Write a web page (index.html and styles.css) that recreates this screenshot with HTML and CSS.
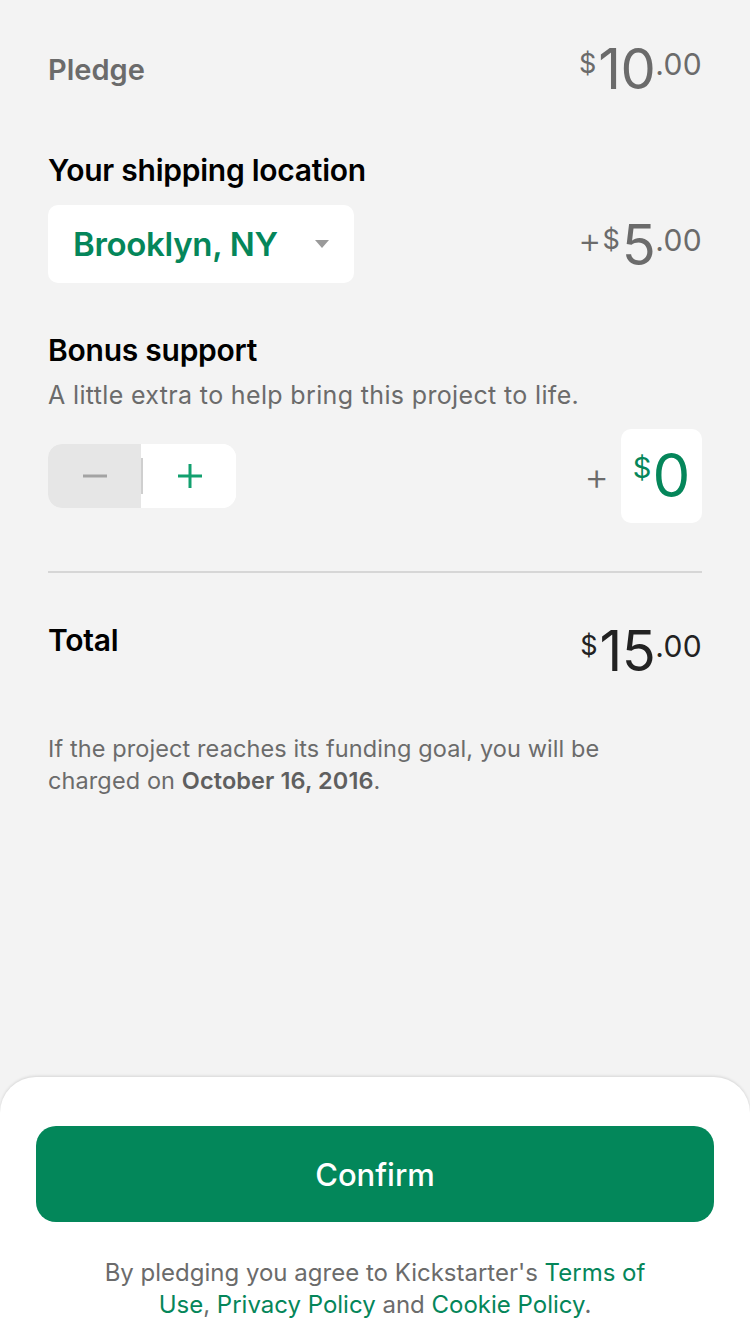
FILE: index.html
```html
<!DOCTYPE html>
<html>
<head>
<meta charset="utf-8">
<link rel="stylesheet" href="styles.css">
</head>
<body>
<div class="screen">
  <main class="content">
    <section class="row pledge-row">
      <span class="label muted">Pledge</span>
      <span class="money muted"><span class="cur">$</span><span class="int">10</span><span class="dec">.00</span></span>
    </section>

    <section class="block shipping">
      <h2 class="title">Your shipping location</h2>
      <div class="row ship-row">
        <div class="select">
          <span class="select-text">Brooklyn, NY</span>
          <svg class="caret" width="16" height="10" viewBox="0 0 16 10"><path d="M1 1h14L8 9z" fill="#9a9a9a"/></svg>
        </div>
        <span class="money muted"><span class="plus-sign">+</span><span class="cur">$</span><span class="int">5</span><span class="dec">.00</span></span>
      </div>
    </section>

    <section class="block bonus">
      <h2 class="title">Bonus support</h2>
      <p class="sub">A little extra to help bring this project to life.</p>
      <div class="row bonus-row">
        <div class="stepper">
          <div class="step minus">
            <svg width="24" height="24" viewBox="0 0 24 24"><path d="M0 12h24" stroke="#a3a3a3" stroke-width="3"/></svg>
          </div>
          <span class="step-sep"></span>
          <div class="step plus">
            <svg width="24" height="24" viewBox="0 0 24 24"><path d="M0 12h24M12 0v24" stroke="#12a06f" stroke-width="3"/></svg>
          </div>
        </div>
        <div class="bonus-amount">
          <span class="bonus-plus">+</span>
          <div class="amount-box"><span class="cur">$</span><span class="int">0</span></div>
        </div>
      </div>
    </section>

    <hr class="divider">

    <section class="row total-row">
      <span class="title">Total</span>
      <span class="money dark"><span class="cur">$</span><span class="int">15</span><span class="dec">.00</span></span>
    </section>

    <p class="note">If the project reaches its funding goal, you will be charged on <b>October 16, 2016</b>.</p>
  </main>

  <footer class="sheet">
    <button class="confirm">Confirm</button>
    <p class="legal">By pledging you agree to Kickstarter's <a>Terms of Use</a>, <a>Privacy Policy</a> and <a>Cookie Policy</a>.</p>
  </footer>
</div>
</body>
</html>
```

FILE: styles.css
```css
* { box-sizing: border-box; margin: 0; padding: 0; }
html, body { width: 750px; height: 1334px; }
body {
  background: #f3f3f3;
  font-family: Inter, "Noto Sans", sans-serif;
  color: #000;
  overflow: hidden;
}
.screen {
  height: 1334px;
  display: flex;
  flex-direction: column;
}
.content {
  flex: 1;
  padding: 0 48px;
}
.row {
  display: flex;
  justify-content: space-between;
}
.muted { color: #6b6b6b; }
.dark { color: #222; }

.pledge-row {
  padding-top: 40px;
  align-items: flex-start;
}
.label {
  font-size: 29px;
  font-weight: 600;
  line-height: 34px;
  margin-top: 13px;
}
.money {
  display: flex;
  align-items: flex-start;
  line-height: 1;
  margin-top: 1px;
}
.money .cur { font-size: 27px; margin-top: 9px; margin-right: 2px; }
.money .int { font-size: 56px; letter-spacing: -0.5px; }
.money .dec { font-size: 30px; margin-top: 8px; letter-spacing: 0.3px; }
.money .plus-sign { font-size: 36px; font-weight: 300; margin-top: 5px; margin-right: 1px; }

.title {
  font-size: 30px;
  font-weight: 600;
  line-height: 36px;
  letter-spacing: -0.25px;
}
.shipping { padding-top: 55px; }
.ship-row { margin-top: 17px; align-items: flex-start; }
.select {
  width: 306px;
  height: 78px;
  background: #fff;
  border-radius: 10px;
  display: flex;
  align-items: center;
  justify-content: space-between;
  padding: 0 24px 0 25px;
}
.select-text {
  color: #05865a;
  font-size: 33px;
  font-weight: 600;
  letter-spacing: -0.3px;
}
.ship-row .money { margin-top: 12px; }

.bonus { padding-top: 49px; }
.sub {
  margin-top: 12px;
  font-size: 25px;
  color: #6b6b6b;
  line-height: 30px;
  letter-spacing: 0.35px;
}
.bonus-row { margin-top: 19px; align-items: center; }
.stepper {
  display: flex;
  align-items: center;
  height: 64px;
  border-radius: 14px;
  overflow: hidden;
  background: #fff;
}
.step {
  height: 64px;
  display: flex;
  align-items: center;
  justify-content: center;
}
.step.minus { background: #e6e6e6; width: 93px; }
.step-sep { width: 2px; height: 36px; background: #cfcfcf; }
.step.plus { background: #fff; width: 93px; }
.bonus-amount { display: flex; align-items: center; gap: 12px; }
.bonus-plus { font-size: 38px; font-weight: 300; color: #6b6b6b; margin-top: 0; }
.amount-box {
  width: 81px;
  height: 94px;
  background: #fff;
  border-radius: 10px;
  display: flex;
  justify-content: center;
  align-items: flex-start;
  padding-top: 16px;
  color: #05865a;
  line-height: 1;
}
.amount-box .cur { font-size: 29px; margin-top: 8px; margin-right: 1px; }
.amount-box .int { font-size: 60px; }

.divider {
  border: none;
  border-top: 2px solid #d6d6d6;
  margin-top: 48px;
}
.total-row { padding-top: 49px; align-items: flex-start; }
.total-row .title { margin-top: 0; }

.note {
  margin-top: 54px;
  max-width: 600px;
  font-size: 23.5px;
  line-height: 32px;
  color: #6b6b6b;
  letter-spacing: 0.1px;
}
.note b { font-weight: 600; color: #5f5f5f; }

.sheet {
  background: #fff;
  border-radius: 36px 36px 0 0;
  box-shadow: 0 -1px 3px rgba(0,0,0,0.12);
  padding: 49px 36px 16px;
  height: 257px;
}
.confirm {
  width: 100%;
  height: 96px;
  border: none;
  border-radius: 20px;
  background: #03875a;
  color: #fff;
  font-family: Inter, "Noto Sans", sans-serif;
  font-size: 31px;
  font-weight: 500;
}
.legal {
  margin-top: 35px;
  text-align: center;
  font-size: 24px;
  line-height: 32px;
  color: #6b6b6b;
  padding: 0 62px;
}
.legal a { color: #05865a; }
```
